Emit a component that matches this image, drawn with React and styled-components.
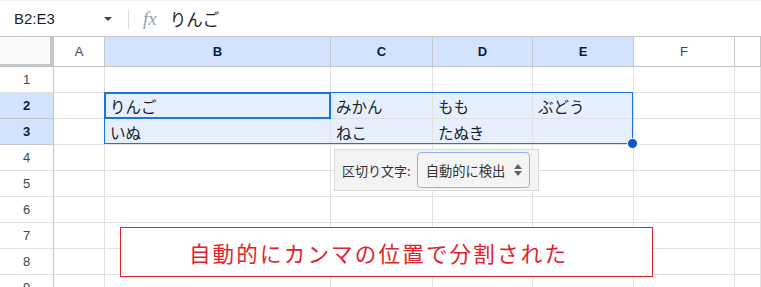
import React from 'react';
import styled, { createGlobalStyle } from 'styled-components';

const GlobalStyle = createGlobalStyle`
  html, body {
    margin: 0;
    padding: 0;
    background: #fff;
  }
  body {
    font-family: "Liberation Sans", Arial, sans-serif;
  }
`

const JP = `"Noto Sans CJK JP", "Liberation Sans", sans-serif`

const columns = ['A', 'B', 'C', 'D', 'E', 'F', '']
const selectedCols = ['B', 'C', 'D', 'E']

const data = {
  2: { B: 'りんご', C: 'みかん', D: 'もも', E: 'ぶどう' },
  3: { B: 'いぬ', C: 'ねこ', D: 'たぬき', E: '' },
}

const Page = styled('div')`
  position: relative;
  width: 761px;
  height: 287px;
  overflow: hidden;
`

const FormulaBar = styled('div')`
  display: flex;
  align-items: center;
  border-top: 1px solid #f1f1f1;
  border-bottom: 1px solid #c4c7c5;
  box-sizing: border-box;
  height: 37px;
`

const NameBox = styled('div')`
  width: 90px;
  padding-left: 14px;
  font-size: 15px;
  color: #1f1f1f;
`

const Caret = styled('div')`
  width: 0;
  height: 0;
  border-left: 4px solid transparent;
  border-right: 4px solid transparent;
  border-top: 4px solid #444;
`

const Divider = styled('div')`
  width: 1px;
  height: 20px;
  background: #dadce0;
  margin: 0 14px 0 16px;
`

const Fx = styled('span')`
  font-family: "Liberation Serif", serif;
  font-style: italic;
  font-size: 19px;
  color: #9aa0a6;
  margin-right: 13px;
`

const FormulaText = styled('span')`
  font-family: ${JP};
  font-size: 16.5px;
  color: #1f1f1f;
`

const Grid = styled('div')`
  display: grid;
  grid-template-columns: 54px 51px 226px 102px 100px 101px 101px 1fr;
  grid-template-rows: 30px;
  grid-auto-rows: 26px;
`

const Corner = styled('div')`
  background: #f8f9fa;
  box-shadow: inset -4px -3px 0 #c4c7c5;
`

const ColHeader = styled('div')`
  display: flex;
  align-items: center;
  justify-content: center;
  font-size: 13px;
  color: ${p => (p.$selected ? '#041e49' : '#444746')};
  font-weight: ${p => (p.$selected ? 700 : 400)};
  background: ${p => (p.$selected ? '#d3e3fd' : '#fff')};
  border-right: 1px solid #c4c7c5;
  border-bottom: 1px solid #c4c7c5;
`

const RowHeader = styled('div')`
  display: flex;
  align-items: center;
  justify-content: center;
  font-size: 13px;
  color: ${p => (p.$selected ? '#041e49' : '#444746')};
  font-weight: ${p => (p.$selected ? 700 : 400)};
  background: ${p => (p.$selected ? '#d3e3fd' : '#fff')};
  border-right: 1px solid #c4c7c5;
  border-bottom: 1px solid ${p => (p.$selected ? '#c4c7c5' : '#e1e1e1')};
`

const Cell = styled('div')`
  display: flex;
  align-items: center;
  padding-left: 5px;
  font-family: ${JP};
  font-size: 15.5px;
  color: #1f1f1f;
  white-space: nowrap;
  overflow: hidden;
  background: ${p => (p.$selected ? '#e6effd' : '#fff')};
  border-right: 1px solid #e1e1e1;
  border-bottom: 1px solid #e1e1e1;
`

const SelectionRange = styled('div')`
  position: absolute;
  left: 104px;
  top: 92px;
  width: 529px;
  height: 52px;
  border: 1px solid #1a73e8;
  box-sizing: border-box;
  pointer-events: none;
`

const ActiveCell = styled('div')`
  position: absolute;
  left: 104px;
  top: 92px;
  width: 227px;
  height: 27px;
  border: 2px solid #1a73e8;
  box-sizing: border-box;
`

const FillHandle = styled('div')`
  position: absolute;
  left: 627px;
  top: 138px;
  width: 11px;
  height: 11px;
  border-radius: 50%;
  background: #0b57d0;
  border: 1px solid #fff;
  box-sizing: border-box;
`

const DelimiterPopup = styled('div')`
  position: absolute;
  left: 334px;
  top: 149px;
  width: 205px;
  height: 42px;
  box-sizing: border-box;
  display: flex;
  align-items: center;
  padding-left: 7px;
  gap: 6px;
  background: #f3f3f3;
  border: 1px solid #dadada;
  font-family: ${JP};
  font-size: 13px;
  color: #333;
`

const SelectBox = styled('div')`
  width: 113px;
  height: 36px;
  box-sizing: border-box;
  display: flex;
  align-items: center;
  justify-content: space-between;
  padding: 0 7px 0 8px;
  border: 1px solid #8ab4f8;
  border-radius: 4px;
  background: #f4f4f4;
  font-size: 13.3px;
  color: #333;
`

const Arrows = styled('div')`
  display: flex;
  flex-direction: column;
  gap: 2px;
`

const Arrow = styled('div')`
  width: 0;
  height: 0;
  border-left: 4px solid transparent;
  border-right: 4px solid transparent;
  ${p => (p.$up ? 'border-bottom: 5px solid #5f6368;' : 'border-top: 5px solid #5f6368;')}
`

const Note = styled('div')`
  position: absolute;
  left: 120px;
  top: 227px;
  width: 533px;
  height: 50px;
  box-sizing: border-box;
  border: 1.5px solid #e3212b;
  background: #fff;
  display: flex;
  align-items: center;
  justify-content: center;
  padding-right: 16px;
  font-family: ${JP};
  font-size: 21.5px;
  letter-spacing: 2.2px;
  color: #e3212b;
`

export default function App() {
  const rows = [1, 2, 3, 4, 5, 6, 7, 8, 9]
  return (
    <>
      <GlobalStyle />
      <Page>
        <FormulaBar>
          <NameBox>B2:E3</NameBox>
          <Caret />
          <Divider />
          <Fx>fx</Fx>
          <FormulaText>りんご</FormulaText>
        </FormulaBar>
        <Grid>
          <Corner />
          {columns.map((c, i) => (
            <ColHeader key={`h${i}`} $selected={selectedCols.includes(c)}>{c}</ColHeader>
          ))}
          {rows.map((r) => {
            const selRow = r === 2 || r === 3
            return (
              <React.Fragment key={r}>
                <RowHeader $selected={selRow}>{r}</RowHeader>
                {columns.map((c, i) => (
                  <Cell key={`${r}-${i}`} $selected={selRow && selectedCols.includes(c)}>
                    {data[r] ? data[r][c] : ''}
                  </Cell>
                ))}
              </React.Fragment>
            )
          })}
        </Grid>
        <SelectionRange />
        <ActiveCell />
        <FillHandle />
        <DelimiterPopup>
          <span>区切り文字:</span>
          <SelectBox>
            <span>自動的に検出</span>
            <Arrows>
              <Arrow $up />
              <Arrow />
            </Arrows>
          </SelectBox>
        </DelimiterPopup>
        <Note>自動的にカンマの位置で分割された</Note>
      </Page>
    </>
  )
}
